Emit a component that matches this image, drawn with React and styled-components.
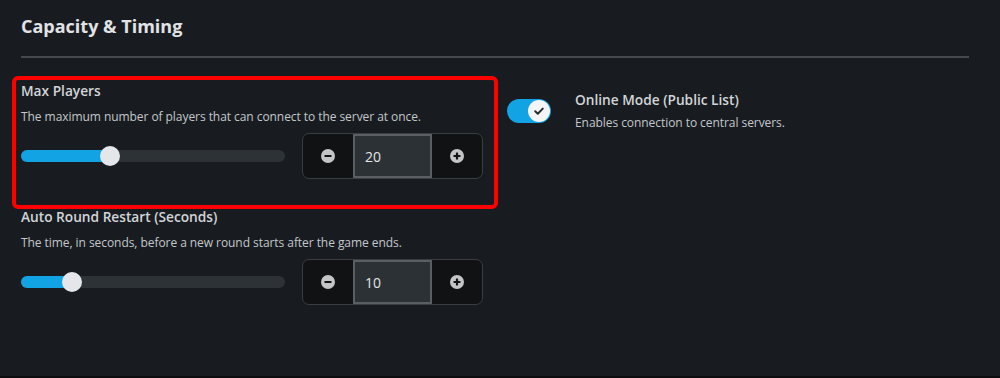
import React from 'react';
import styled, { createGlobalStyle } from 'styled-components';

const GlobalStyle = createGlobalStyle`
  html, body {
    margin: 0;
    padding: 0;
    background: #0b0d0f;
  }
  * {
    box-sizing: border-box;
  }
`;

function MinusIcon() {
  return (
    <svg width='14' height='14' viewBox='0 0 14 14'>
      <circle cx='7' cy='7' r='7' fill='#c4c5c7' />
      <rect x='3.5' y='5.9' width='7' height='2.2' rx='0.6' fill='#111213' />
    </svg>
  );
}

function PlusIcon() {
  return (
    <svg width='14' height='14' viewBox='0 0 14 14'>
      <circle cx='7' cy='7' r='7' fill='#c4c5c7' />
      <rect x='3.5' y='5.9' width='7' height='2.2' rx='0.6' fill='#111213' />
      <rect x='5.9' y='3.5' width='2.2' height='7' rx='0.6' fill='#111213' />
    </svg>
  );
}

function CheckIcon() {
  return (
    <svg width='12' height='12' viewBox='0 0 12 12'>
      <path
        d='M2.2 6.3 L4.8 8.8 L9.8 3.6'
        fill='none'
        stroke='#2a2d31'
        strokeWidth='2'
        strokeLinecap='round'
        strokeLinejoin='round'
      />
    </svg>
  );
}

function Slider({ value, min, max }) {
  const ratio = (value - min) / (max - min);
  const pos = `calc(10px + (100% - 20px) * ${ratio})`;
  return (
    <Track>
      <Rail>
        <Fill style={{ width: pos }} />
        <Thumb style={{ left: pos }} />
      </Rail>
    </Track>
  );
}

function Stepper({ value }) {
  return (
    <StepperBox>
      <StepButton>
        <MinusIcon />
      </StepButton>
      <StepValue>{value}</StepValue>
      <StepButton>
        <PlusIcon />
      </StepButton>
    </StepperBox>
  );
}

function NumberField({ label, description, value, min, max, highlighted }) {
  return (
    <Field $highlighted={highlighted}>
      <Label>{label}</Label>
      <Description>{description}</Description>
      <Controls>
        <Slider value={value} min={min} max={max} />
        <Stepper value={value} />
      </Controls>
    </Field>
  );
}

function App() {
  return (
    <>
      <GlobalStyle />
      <Page>
        <Title>Capacity &amp; Timing</Title>
        <Divider />
        <Grid>
          <Column>
            <NumberField
              highlighted
              label='Max Players'
              description='The maximum number of players that can connect to the server at once.'
              value={20}
              min={0}
              max={62}
            />
            <NumberField
              label='Auto Round Restart (Seconds)'
              description='The time, in seconds, before a new round starts after the game ends.'
              value={10}
              min={0}
              max={60}
            />
          </Column>
          <Column>
            <ToggleRow>
              <Toggle $on>
                <Knob>
                  <CheckIcon />
                </Knob>
              </Toggle>
              <ToggleText>
                <Label>Online Mode (Public List)</Label>
                <ToggleDescription>Enables connection to central servers.</ToggleDescription>
              </ToggleText>
            </ToggleRow>
          </Column>
        </Grid>
      </Page>
    </>
  );
}

export default App;

const Page = styled.div`
  min-height: 376px;
  background: #181c20;
  padding: 14px 31px 0 21px;
  font-family: 'Open Sans', 'Noto Sans', sans-serif;
`;

const Title = styled.h2`
  margin: 0 0 18px;
  font-size: 18px;
  line-height: 24px;
  font-weight: 700;
  color: #e1e3e6;
`;

const Divider = styled.div`
  height: 2px;
  background: #45494e;
`;

const Grid = styled.div`
  display: grid;
  grid-template-columns: 1fr 1fr;
  column-gap: 24px;
  margin-top: 23px;
`;

const Column = styled.div`
  display: flex;
  flex-direction: column;
  gap: 28px;
`;

const Field = styled.div`
  position: relative;
  display: flex;
  flex-direction: column;

  &::after {
    content: '';
    display: ${props => (props.$highlighted ? 'block' : 'none')};
    position: absolute;
    top: -5px;
    left: -9px;
    right: -15px;
    bottom: -30px;
    border: 4px solid #ff0000;
    border-radius: 6px;
    pointer-events: none;
  }
`;

const Label = styled.div`
  font-size: 13.7px;
  line-height: 20px;
  font-weight: 600;
  color: #d2d5d8;
`;

const Description = styled.div`
  margin-top: 7px;
  font-size: 12px;
  line-height: 18px;
  letter-spacing: -0.06px;
  color: #c3c7cb;
`;

const Controls = styled.div`
  display: flex;
  align-items: center;
  gap: 17px;
  margin-top: 7px;
`;

const Track = styled.div`
  flex: 1;
  display: flex;
  align-items: center;
  height: 46px;
`;

const Rail = styled.div`
  position: relative;
  width: 100%;
  height: 12px;
  border-radius: 6px;
  background: #2d3236;
`;

const Fill = styled.div`
  height: 100%;
  border-radius: 6px;
  background: #12a3e4;
`;

const Thumb = styled.div`
  position: absolute;
  top: 50%;
  width: 20px;
  height: 20px;
  margin: -10px 0 0 -10px;
  border-radius: 50%;
  background: #e4e6ea;
`;

const StepperBox = styled.div`
  display: flex;
  width: 181px;
  height: 46px;
  border: 1px solid #3a3d41;
  border-radius: 7px;
  background: #111213;
  overflow: hidden;
`;

const StepButton = styled.div`
  display: flex;
  align-items: center;
  justify-content: center;
  flex: 1;
  cursor: pointer;
`;

const StepValue = styled.div`
  display: flex;
  align-items: center;
  width: 79px;
  padding-left: 10px;
  border: 2px solid #5a5f64;
  background: #2c3136;
  font-size: 14px;
  color: #e2e4e7;
`;

const ToggleRow = styled.div`
  display: flex;
  align-items: center;
  gap: 24px;
  padding-top: 9px;
`;

const Toggle = styled.div`
  flex: none;
  display: flex;
  align-items: center;
  justify-content: ${props => (props.$on ? 'flex-end' : 'flex-start')};
  width: 44px;
  height: 24px;
  padding: 0 1px;
  border-radius: 12px;
  background: ${props => (props.$on ? '#12a3e4' : '#3a3e43')};
`;

const Knob = styled.div`
  display: flex;
  align-items: center;
  justify-content: center;
  width: 22px;
  height: 22px;
  border-radius: 50%;
  background: #f4f5f7;
`;

const ToggleText = styled.div`
  display: flex;
  flex-direction: column;
`;

const ToggleDescription = styled(Description)`
  margin-top: 4px;
`;
